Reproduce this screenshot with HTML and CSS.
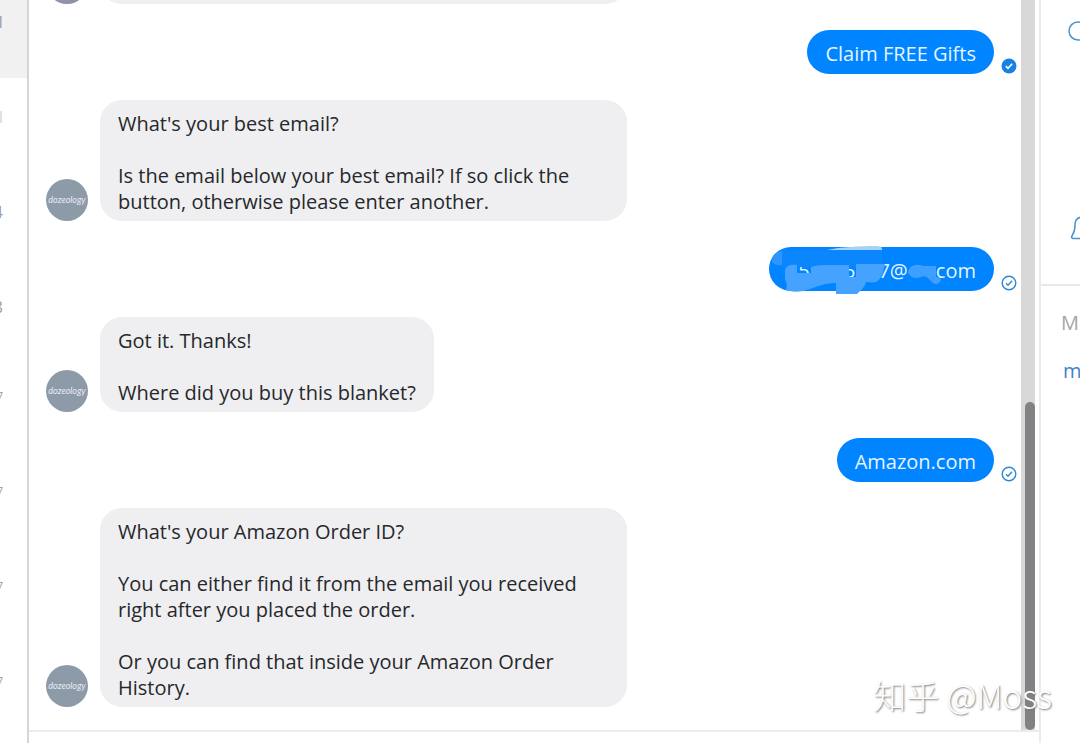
FILE: index.html
```
<!DOCTYPE html>
<html lang="en">
<head>
    <meta charset="UTF-8">
    <meta name="viewport" content="width=device-width, initial-scale=1.0">
    <title>Messenger</title>
    <link rel="stylesheet" href="styles.css">
</head>
<body>

    <div class="app">
        <!-- Conversation list -->
        <aside class="threads">
            <div class="thread active"><span class="thread-time big">M</span></div>
            <div class="thread"><span class="thread-time big faint">l</span></div>
            <div class="thread"><span class="thread-time big">4</span></div>
            <div class="thread"><span class="thread-time big">8</span></div>
            <div class="thread"><span class="thread-time">7</span></div>
            <div class="thread"><span class="thread-time">7</span></div>
            <div class="thread"><span class="thread-time">7</span></div>
            <div class="thread"><span class="thread-time">7</span></div>
        </aside>

        <!-- Open conversation -->
        <main class="chat">
            <div class="chat-body">
                <div class="messages">
                    <div class="message">
                        <div class="avatar avatar-old"></div>
                        <div class="bubble bubble-wide"><p>&nbsp;</p></div>
                    </div>
                    <div class="message sent">
                        <div class="bubble"><p>Claim FREE Gifts</p></div>
                        <svg class="status" viewBox="0 0 16 16"><circle cx="8" cy="8" r="7.5" fill="#1682e6"/><path d="M4.8 8.2l2.2 2.1 4.2-4.6" fill="none" stroke="#fff" stroke-width="1.6"/></svg>
                    </div>
                    <div class="message">
                        <div class="avatar">dozeology</div>
                        <div class="bubble bubble-wide">
                            <p>What's your best email?</p>
                            <p>Is the email below your best email? If so click the button, otherwise please enter another.</p>
                        </div>
                    </div>
                    <div class="message sent">
                        <div class="bubble">
                            <p>&#8199;5&#8199;&#8199;&#8199;5&#8199;&#8199;7@&#8199;&#8199;.com</p>
                            <svg class="scribble" viewBox="0 0 224 50">
                                <path d="M13 3h100v17H13z" fill="#0b86fc"/>
                                <path d="M3 13c0-5 4-8 10-9v14c-6 1-10-1-10-5z" fill="#2e95fb"/>
                                <path d="M58 3c14-3 32-4 48-4 6 0 7 1 7 4z" fill="#a5d2f4"/>
                                <path d="M16 23c1-4 5-6 12-5v8h14v-6c6-2 13-2 20-2h18v12h7V17h29c-2 8-3 15-9 18-4 1-7 0-10 0-1 5-5 8-9 12H67V36c-10 0-18 3-26 6-8 3-20 4-24 0 2-4 0-7-1-10z" fill="#45a3ff"/>
                                <path d="M139 26c1-8 8-10 15-7h13v11c2 0 4 0 5 3-2 5-7 5-10 1-4-4-6-6-10-4-5 2-10 1-13-4z" fill="#3d9fff"/>
                            </svg>
                        </div>
                        <svg class="status" viewBox="0 0 16 16"><circle cx="8" cy="8" r="6.8" fill="none" stroke="#2d88d2" stroke-width="1.4"/><path d="M5 8.3l2 2 4-4.6" fill="none" stroke="#2d88d2" stroke-width="1.4"/></svg>
                    </div>
                    <div class="message">
                        <div class="avatar">dozeology</div>
                        <div class="bubble">
                            <p>Got it. Thanks!</p>
                            <p>Where did you buy this blanket?</p>
                        </div>
                    </div>
                    <div class="message sent">
                        <div class="bubble"><p>Amazon.com</p></div>
                        <svg class="status" viewBox="0 0 16 16"><circle cx="8" cy="8" r="6.8" fill="none" stroke="#2d88d2" stroke-width="1.4"/><path d="M5 8.3l2 2 4-4.6" fill="none" stroke="#2d88d2" stroke-width="1.4"/></svg>
                    </div>
                    <div class="message">
                        <div class="avatar">dozeology</div>
                        <div class="bubble bubble-wide">
                            <p>What's your Amazon Order ID?</p>
                            <p>You can either find it from the email you received right after you placed the order.</p>
                            <p>Or you can find that inside your Amazon Order History.</p>
                        </div>
                    </div>
                </div>
                <div class="scrollbar"><div class="scroll-thumb"></div></div>
            </div>
            <div class="composer"></div>
        </main>

        <!-- Conversation details -->
        <aside class="details">
            <div class="details-actions">
                <svg class="icon" viewBox="0 0 24 24"><circle cx="9" cy="13" r="9" fill="none" stroke="#4a94cf" stroke-width="1.5"/><path d="M16 20l6 4" stroke="#4a94cf" stroke-width="1.5"/></svg>
                <svg class="icon" viewBox="0 0 24 24"><path d="M14 1C8 1 6 5 6 9c0 5-.5 7-2.500 10-1.500 2-1 3.500 1 3.500H23.500c2 0 2.500-1.500 1-3.500-2-3-2.500-5-2.500-10 0-4-2-8-8-8z" fill="none" stroke="#4a94cf" stroke-width="1.5"/></svg>
            </div>
            <div class="details-links">
                <h2 class="details-title">M</h2>
                <a class="details-link" href="#">m</a>
            </div>
        </aside>

        <div class="watermark">知乎 @Moss</div>
    </div>

</body>
</html>
```
FILE: styles.css
```
* {
    box-sizing: border-box;
}

body {
    margin: 0;
    background-color: #fff;
    color: #26282b;
    font-family: "Open Sans", "Noto Sans", sans-serif;
    font-size: 20px;
    line-height: 26px;
    overflow: hidden;
}

.app {
    display: flex;
    height: 100vh;
    position: relative;
}

/* Conversation list */
.threads {
    display: flex;
    flex-direction: column;
    justify-content: flex-end;
    flex: 0 0 29px;
    border-right: 2px solid #d6d6d6;
    overflow: hidden;
}

.thread {
    display: flex;
    justify-content: flex-end;
    flex: 0 0 95px;
    padding: 26px 24px 0 0;
}

.thread.active {
    background-color: #f1f1f1;
}

.thread-time {
    color: #a0a0a0;
    font-size: 12px;
    line-height: 16px;
}

.thread-time.big {
    font-size: 17px;
    line-height: 26px;
}

.thread-time.faint {
    color: #d8d8d8;
}

/* Chat */
.chat {
    display: flex;
    flex-direction: column;
    flex: 1;
    min-width: 0;
}

.chat-body {
    display: flex;
    flex: 1;
    min-height: 0;
    padding-right: 4px;
}

.messages {
    display: flex;
    flex-direction: column;
    justify-content: flex-end;
    gap: 26px;
    flex: 1;
    padding: 0 4px 23px 17px;
    overflow: hidden;
}

.message {
    display: flex;
    align-items: flex-end;
    gap: 12px;
}

.message.sent {
    justify-content: flex-end;
    gap: 7px;
}

.avatar {
    display: flex;
    align-items: center;
    justify-content: center;
    flex: 0 0 42px;
    height: 42px;
    border-radius: 50%;
    background-color: #8d9aa8;
    color: #e8edf2;
    font-family: Lato, sans-serif;
    font-size: 9px;
    font-style: italic;
}

.avatar-old {
    background-color: #9093a8;
}

.bubble {
    position: relative;
    max-width: 527px;
    padding: 11px 18px 6px;
    border-radius: 22px;
    background-color: #efeff1;
}

.bubble-wide {
    width: 527px;
}

.bubble p {
    margin: 0;
}

.bubble p + p {
    margin-top: 26px;
}

.sent .bubble {
    padding: 11px 18px 7px;
    background-color: #0084ff;
    color: #e6f4ff;
}

/* Scribbled-over part of the address */
.scribble {
    position: absolute;
    top: 0;
    left: 0;
    width: 224px;
    height: 50px;
    overflow: visible;
}

.status {
    width: 16px;
    height: 16px;
}

/* Scrollbar */
.scrollbar {
    display: flex;
    flex-direction: column;
    justify-content: flex-end;
    align-items: flex-end;
    flex: 0 0 14px;
    background-color: #d8d8d9;
}

.scroll-thumb {
    width: 10px;
    height: 45%;
    border-radius: 5px;
    background-color: #828284;
}

.composer {
    height: 13px;
    border-top: 2px solid #ececec;
}

/* Details */
.details {
    flex: 0 0 41px;
    border-left: 2px solid #ebebeb;
    overflow: hidden;
}

.details-actions {
    display: flex;
    flex-direction: column;
    justify-content: space-between;
    height: 286px;
    padding: 18px 0 44px 28px;
    border-bottom: 2px solid #e8e8e8;
}

.icon {
    width: 24px;
    height: 24px;
    overflow: visible;
}

.details-links {
    padding: 24px 0 0 20px;
}

.details-title {
    margin: 0;
    color: #a6a6a6;
    font-size: 20px;
    font-weight: normal;
}

.details-link {
    display: block;
    margin-top: 22px;
    padding-left: 2px;
    color: #3d83cc;
    text-decoration: none;
}

/* Watermark */
.watermark {
    position: absolute;
    right: 28px;
    bottom: 26px;
    color: #fff;
    font-family: "Noto Sans CJK SC", sans-serif;
    font-size: 33px;
    font-weight: 300;
    line-height: 44px;
    text-shadow: 1px 1px 2px #777;
}
```
